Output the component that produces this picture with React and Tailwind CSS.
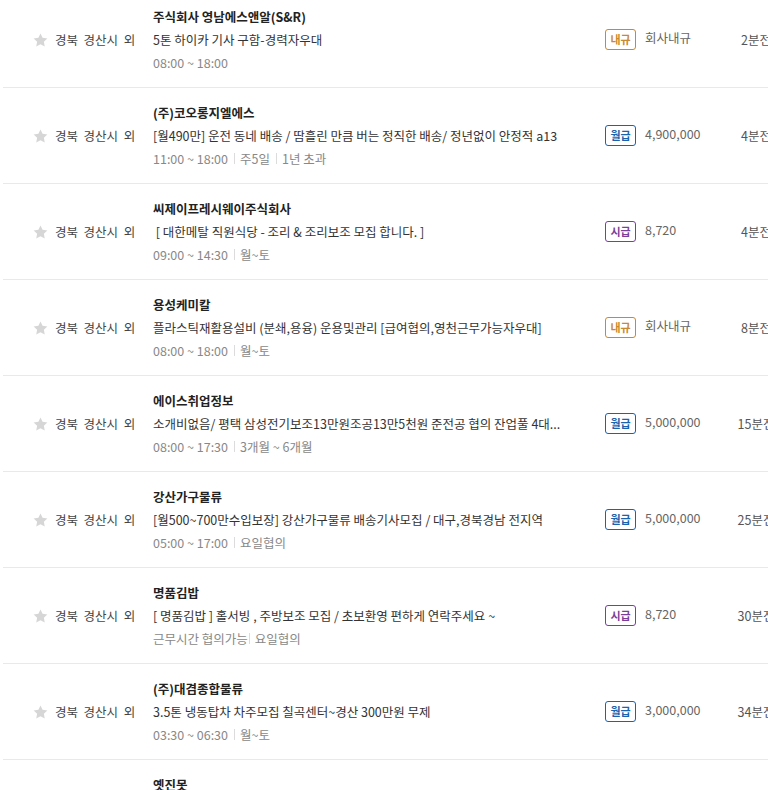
import React from "react";

const rows = [
  {
    title: "주식회사 영남에스앤알(S&R)",
    desc: "5톤 하이카 기사 구함-경력자우대",
    meta: ["08:00 ~ 18:00"],
    pay: "내규",
    amount: "회사내규",
    time: "2분전",
  },
  {
    title: "(주)코오롱지엘에스",
    desc: "[월490만] 운전 동네 배송 / 땀흘린 만큼 버는 정직한 배송/ 정년없이 안정적 a13",
    meta: ["11:00 ~ 18:00", "주5일", "1년 초과"],
    pay: "월급",
    amount: "4,900,000",
    time: "4분전",
  },
  {
    title: "씨제이프레시웨이주식회사",
    desc: " [ 대한메탈 직원식당 - 조리 & 조리보조 모집 합니다. ]",
    meta: ["09:00 ~ 14:30", "월~토"],
    pay: "시급",
    amount: "8,720",
    time: "4분전",
  },
  {
    title: "용성케미칼",
    desc: "플라스틱재활용설비 (분쇄,용융) 운용및관리 [급여협의,영천근무가능자우대]",
    meta: ["08:00 ~ 18:00", "월~토"],
    pay: "내규",
    amount: "회사내규",
    time: "8분전",
  },
  {
    title: "에이스취업정보",
    desc: "소개비없음/ 평택 삼성전기보조13만원조공13만5천원 준전공 협의 잔업풀 4대...",
    meta: ["08:00 ~ 17:30", "3개월 ~ 6개월"],
    pay: "월급",
    amount: "5,000,000",
    time: "15분전",
  },
  {
    title: "강산가구물류",
    desc: "[월500~700만수입보장] 강산가구물류 배송기사모집 / 대구,경북경남 전지역",
    meta: ["05:00 ~ 17:00", "요일협의"],
    pay: "월급",
    amount: "5,000,000",
    time: "25분전",
  },
  {
    title: "명품김밥",
    desc: "[ 명품김밥 ] 홀서빙 , 주방보조 모집 / 초보환영 편하게 연락주세요 ~",
    meta: ["근무시간 협의가능", "요일협의"],
    tight: true,
    pay: "시급",
    amount: "8,720",
    time: "30분전",
  },
  {
    title: "(주)대겸종합물류",
    desc: "3.5톤 냉동탑차 차주모집 칠곡센터~경산 300만원 무제",
    meta: ["03:30 ~ 06:30", "월~토"],
    pay: "월급",
    amount: "3,000,000",
    time: "34분전",
  },
  {
    title: "옛진못",
    desc: "",
    meta: [],
    pay: "",
    amount: "",
    time: "",
  },
];

function Badge({ pay }) {
  if (!pay) return <div className="w-[31px]" />;
  const cls =
    pay === "월급"
      ? "border-[#1a63ad] text-[#1a63ad]"
      : pay === "시급"
      ? "border-[#7b3f99] text-[#7b3f99]"
      : "border-[#c98a2e] text-[#c98a2e]";
  return (
    <div
      className={
        "w-[31px] h-[21px] flex items-center justify-center rounded-[3px] border text-[11px] font-bold leading-none " +
        cls
      }
    >
      {pay}
    </div>
  );
}

function Star() {
  return (
    <svg width="15" height="14" viewBox="0 0 24 23" className="shrink-0">
      <path
        d="M12 0.8l3.4 7.2 7.9 1-5.8 5.5 1.5 7.8L12 18.4l-7 3.9 1.5-7.8L0.7 9l7.9-1z"
        fill="#d6d6d6"
      />
    </svg>
  );
}

function Row({ r }) {
  return (
    <div className="flex items-center h-[96px] border-b border-[#e9e9e9] w-[820px] shrink-0">
      <div className="w-[30px] shrink-0" />
      <Star />
      <div className="w-[7px] shrink-0" />
      <div className="w-[98px] shrink-0 text-[12.5px] text-[#444] leading-[20px] whitespace-pre">
        {r.desc ? "경북  경산시  외" : ""}
      </div>
      <div className="w-[420px] shrink-0 flex flex-col -mt-[1px]">
        <div className="text-[12.5px] font-bold text-[#222] leading-[23px] h-[23px] whitespace-nowrap">{r.title}</div>
        <div className="text-[12.5px] text-[#333] leading-[24px] h-[24px] whitespace-pre">
          {r.desc}
        </div>
        <div className="flex items-center text-[12.5px] text-[#888] leading-[22px] h-[22px] whitespace-nowrap">
          {r.meta.map((m, i) => (
            <React.Fragment key={i}>
              {i > 0 && (
                <span
                  className={
                    "inline-block w-px h-[11px] bg-[#dcdcdc] mr-[5px] " +
                    (r.tight ? "ml-[1px]" : "ml-[6px]")
                  }
                />
              )}
              <span>{m}</span>
            </React.Fragment>
          ))}
        </div>
      </div>
      <div className="w-[32px] shrink-0" />
      <Badge pay={r.pay} />
      <div className="w-[9px] shrink-0" />
      <div className="w-[91px] shrink-0 text-[12.5px] text-[#666] leading-[20px] -mt-[3px]">
        {r.amount}
      </div>
      <div className="w-[40px] shrink-0 text-center text-[12.5px] text-[#555] leading-[20px] whitespace-nowrap">
        {r.time}
      </div>
    </div>
  );
}

export default function App() {
  return (
    <div className="w-[768px] h-[790px] overflow-hidden bg-white font-['Noto_Sans_CJK_KR','Noto_Sans',sans-serif]">
      <div className="flex flex-col -mt-[8px] ml-[3px]">
        {rows.map((r, i) => (
          <Row key={i} r={r} />
        ))}
      </div>
    </div>
  );
}
